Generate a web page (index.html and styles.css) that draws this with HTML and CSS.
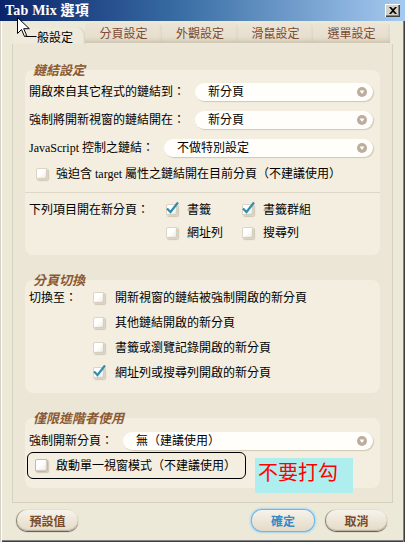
FILE: index.html
```html
<!DOCTYPE html>
<html lang="zh-Hant">
<head>
<meta charset="utf-8">
<title>Tab Mix 選項</title>
<link rel="stylesheet" href="styles.css">
</head>
<body>
<div class="window">
  <div class="titlebar">
    <span class="title">Tab Mix 選項</span>
    <span class="close"><svg width="8" height="7" viewBox="0 0 8 7"><path d="M0 0h2l2 2 2-2h2L5 3.5 8 7H6L4 5 2 7H0l3-3.5z" fill="#000"/></svg></span>
  </div>
  <div class="tabs">
    <div class="tab active">一般設定</div>
    <div class="tab t1">分頁設定</div>
    <div class="tab t2">外觀設定</div>
    <div class="tab t3">滑鼠設定</div>
    <div class="tab t4">選單設定</div>
  </div>
  <div class="panel">
    <div class="legend">鏈結設定</div>
    <div class="box box1">
      <div class="row">
        <span class="label">開啟來自其它程式的鏈結到：</span>
        <div class="select"><span class="val">新分頁</span><span class="arrow"><svg width="10" height="10" viewBox="0 0 10 10"><circle cx="5" cy="5" r="5" fill="#bcae9e"/><path d="M2.6 3.6h4.8L5 7z" fill="#fff"/></svg></span></div>
      </div>
      <div class="row gap10">
        <span class="label">強制將開新視窗的鏈結開在：</span>
        <div class="select"><span class="val">新分頁</span><span class="arrow"><svg width="10" height="10" viewBox="0 0 10 10"><circle cx="5" cy="5" r="5" fill="#bcae9e"/><path d="M2.6 3.6h4.8L5 7z" fill="#fff"/></svg></span></div>
      </div>
      <div class="row gap10">
        <span class="label">JavaScript 控制之鏈結：</span>
        <div class="select"><span class="val">不做特別設定</span><span class="arrow"><svg width="10" height="10" viewBox="0 0 10 10"><circle cx="5" cy="5" r="5" fill="#bcae9e"/><path d="M2.6 3.6h4.8L5 7z" fill="#fff"/></svg></span></div>
      </div>
      <div class="check-row">
        <span class="cb"></span><span>強迫含 target 屬性之鏈結開在目前分頁（不建議使用）</span>
      </div>
      <div class="section">
        <div class="grid-newtab">
          <span class="label">下列項目開在新分頁：</span>
          <span class="opt"><span class="cb on"><svg width="15" height="14" viewBox="0 0 15 14"><path d="M2 7.5l3.5 3.5L13 1.5" fill="none" stroke="#2f8fb2" stroke-width="2.2"/></svg></span>書籤</span>
          <span class="opt"><span class="cb on"><svg width="15" height="14" viewBox="0 0 15 14"><path d="M2 7.5l3.5 3.5L13 1.5" fill="none" stroke="#2f8fb2" stroke-width="2.2"/></svg></span>書籤群組</span>
          <span class="opt c2"><span class="cb"></span>網址列</span>
          <span class="opt"><span class="cb"></span>搜尋列</span>
        </div>
      </div>
    </div>

    <div class="legend mt">分頁切換</div>
    <div class="box box2">
      <div class="grid-switch">
        <span class="label">切換至：</span>
        <span class="opt"><span class="cb"></span>開新視窗的鏈結被強制開啟的新分頁</span>
        <span class="opt c2"><span class="cb"></span>其他鏈結開啟的新分頁</span>
        <span class="opt c2"><span class="cb"></span>書籤或瀏覽記錄開啟的新分頁</span>
        <span class="opt c2"><span class="cb on"><svg width="15" height="14" viewBox="0 0 15 14"><path d="M2 7.5l3.5 3.5L13 1.5" fill="none" stroke="#2f8fb2" stroke-width="2.2"/></svg></span>網址列或搜尋列開啟的新分頁</span>
      </div>
    </div>

    <div class="legend mt">僅限進階者使用</div>
    <div class="box box3">
      <div class="row">
        <span class="label">強制開新分頁：</span>
        <div class="select"><span class="val">無（建議使用）</span><span class="arrow"><svg width="10" height="10" viewBox="0 0 10 10"><circle cx="5" cy="5" r="5" fill="#bcae9e"/><path d="M2.6 3.6h4.8L5 7z" fill="#fff"/></svg></span></div>
      </div>
      <div class="highlight">
        <span class="cb focus"></span><span>啟動單一視窗模式（不建議使用）</span>
      </div>
    </div>
  </div>
  <div class="buttons">
    <button class="btn">預設值</button>
    <span class="spacer"></span>
    <button class="btn primary">確定</button>
    <button class="btn">取消</button>
  </div>

  <div class="note">不要打勾</div>
  <svg class="cursor" width="13" height="21" viewBox="0 0 13 21"><path d="M0.5 0.5v16l4-4 3 7 2.2-1-3-6.8h5.6z" fill="#fff" stroke="#000" stroke-width="1"/></svg>
</div>
</body>
</html>
```

FILE: styles.css
```css
* { box-sizing: border-box; }
html, body { margin: 0; padding: 0; }
body {
  width: 405px;
  height: 542px;
  overflow: hidden;
  background: #ece9d8;
  font-family: "Liberation Serif", "Noto Sans CJK TC", serif;
  font-size: 12px;
  color: #000;
}
.window {
  position: relative;
  width: 405px;
  height: 542px;
  background: #ece9d8;
  box-shadow: inset 1px 0 0 #d4d0c8, inset 2px 0 0 #fff,
              inset -1px 0 0 #404040, inset -2px 0 0 #808080,
              inset 0 -1px 0 #404040, inset 0 -2px 0 #808080;
}

/* title bar */
.titlebar {
  height: 21px;
  display: flex;
  align-items: center;
  justify-content: space-between;
  padding: 0 5px 0 5px;
  background: linear-gradient(90deg, #0a246a 0%, #3a6ea5 45%, #a6caf0 100%);
}
.title {
  color: #fff;
  font-family: "Liberation Serif", "Noto Sans CJK TC", serif;
  font-weight: bold;
  font-size: 14px;
  line-height: 16px;
  letter-spacing: 0.2px;
}
.close {
  width: 15px;
  height: 13px;
  background: #d4d0c8;
  display: flex;
  align-items: center;
  justify-content: center;
  box-shadow: inset 1px 1px 0 #fff, inset -1px -1px 0 #404040, inset -2px -2px 0 #808080;
}

/* tabs */
.tabs {
  height: 23px;
  display: flex;
  align-items: flex-end;
  padding-left: 13px;
  font-family: "Noto Sans CJK TC", sans-serif;
}
.tab {
  height: 20px;
  margin-bottom: 1px;
  display: flex;
  align-items: center;
  justify-content: center;
  color: #7c4b33;
  font-size: 12px;
  line-height: 14px;
  background: linear-gradient(#ece5d6, #e4dccb);
  box-shadow: inset -3px -6px 4px -4px #c9bfad;
  border-radius: 4px 4px 0 0;
}
.tab.active {
  width: 72px;
  height: 17px;
  margin-bottom: 0;
  color: #000;
  background: #efeadc;
  box-shadow: inset -2px 0 2px -1px #d6cdbb;
  border-radius: 6px 8px 0 0;
  padding-top: 2px;
}
.t1 { width: 77px; }
.t2 { width: 76px; }
.t3 { width: 75px; }
.t4 { width: 77px; }

/* panel */
.panel {
  margin: 0 12px 0 12px;
  background: #ebe6d6;
  border: 1px solid #d6d0bf;
  border-top: none;
  padding: 19px 12px 14px 12px;
  font-family: "Liberation Serif", "Noto Sans CJK TC", serif;
}
.legend {
  position: relative;
  z-index: 1;
  height: 14px;
  line-height: 14px;
  margin-bottom: -7px;
  padding-left: 8px;
  font-family: "Noto Sans CJK TC", sans-serif;
  font-size: 13px;
  font-weight: bold;
  font-style: italic;
  color: #8b5a33;
}
.legend.mt { margin-top: 18px; }
.box {
  background: #f3eee0;
  border-radius: 8px;
  padding: 13px 7px 13px 4px;
}
.box2 { padding: 9px 7px 11px 4px; }
.box3 { padding: 14px 7px 9px 4px; }

.label { white-space: nowrap; line-height: 18px; }
.row {
  height: 18px;
  display: flex;
  align-items: center;
  gap: 10px;
}
.row.gap10 { margin-top: 10px; }
.select {
  flex: 1;
  height: 18px;
  border-radius: 9px;
  background: #fffefb;
  display: flex;
  align-items: center;
  padding: 0 6px 0 13px;
  box-shadow: 1px 1px 1px rgba(150, 130, 100, 0.35);
}
.select .val { flex: 1; line-height: 18px; }
.arrow { width: 10px; height: 10px; display: flex; }

.cb {
  position: relative;
  flex: none;
  width: 12px;
  height: 12px;
  border-radius: 2px;
  border: 1px solid #dcd5c5;
  background: linear-gradient(135deg, #ffffff 40%, #ece8df);
  box-shadow: inset -1px -1px 1px #d3cab8, 1px 1px 1px rgba(160, 145, 120, 0.4);
}
.cb svg {
  position: absolute;
  left: -2px;
  top: -4px;
}
.cb.focus {
  width: 13px;
  height: 13px;
  border-color: #9ec3df;
}
.check-row {
  margin-top: 11px;
  height: 12px;
  display: flex;
  align-items: center;
  gap: 8px;
  padding-left: 7px;
  line-height: 14px;
}

.section {
  margin: 12px -7px 0 -4px;
  padding: 8px 7px 0 4px;
  border-top: 1px solid #ddd7c7;
}
.grid-newtab {
  display: grid;
  grid-template-columns: 137px 76px auto;
  grid-auto-rows: 18px;
  row-gap: 5px;
}
.opt {
  display: flex;
  align-items: center;
  gap: 9px;
  white-space: nowrap;
  line-height: 18px;
}
.opt.c2 { grid-column: 2; }
.grid-switch {
  display: grid;
  grid-template-columns: 64px auto;
  grid-auto-rows: 18px;
  row-gap: 7px;
}
.grid-switch .opt { gap: 10px; }

.highlight {
  margin: 2px 0 0 -2px;
  width: 219px;
  height: 27px;
  border: 1px solid #000;
  border-radius: 6px;
  display: flex;
  align-items: center;
  gap: 8px;
  padding-left: 7px;
  line-height: 14px;
}

/* buttons */
.buttons {
  display: flex;
  align-items: center;
  margin-top: 7px;
  padding: 0 18px 0 17px;
  gap: 12px;
}
.spacer { flex: 1; }
.btn {
  width: 61px;
  height: 21px;
  border: none;
  border-radius: 10px;
  background: linear-gradient(#f7f3ea, #e3dac8);
  box-shadow: 0 1px 1px #5e5546, inset 0 -1px 1px #b9ad98, -1px 0 1px #8a8070;
  font-family: "Noto Sans CJK TC", sans-serif;
  font-size: 12px;
  font-weight: bold;
  color: #7b4a26;
  padding: 0;
  line-height: 21px;
}
.btn.primary {
  width: 62px;
  color: #3a88c2;
  box-shadow: 0 0 0 1px #6fb6e6, 0 0 2px 2px #a8d8f4, 0 1px 1px #5e5546;
}

/* annotation overlay */
.note {
  position: absolute;
  left: 255px;
  top: 458px;
  width: 98px;
  height: 35px;
  background: #afeeee;
  color: #ff0000;
  font-family: "Noto Sans CJK TC", serif;
  font-size: 20px;
  line-height: 20px;
  padding: 4px 0 0 3px;
}
.cursor {
  position: absolute;
  left: 17px;
  top: 17px;
}
```
